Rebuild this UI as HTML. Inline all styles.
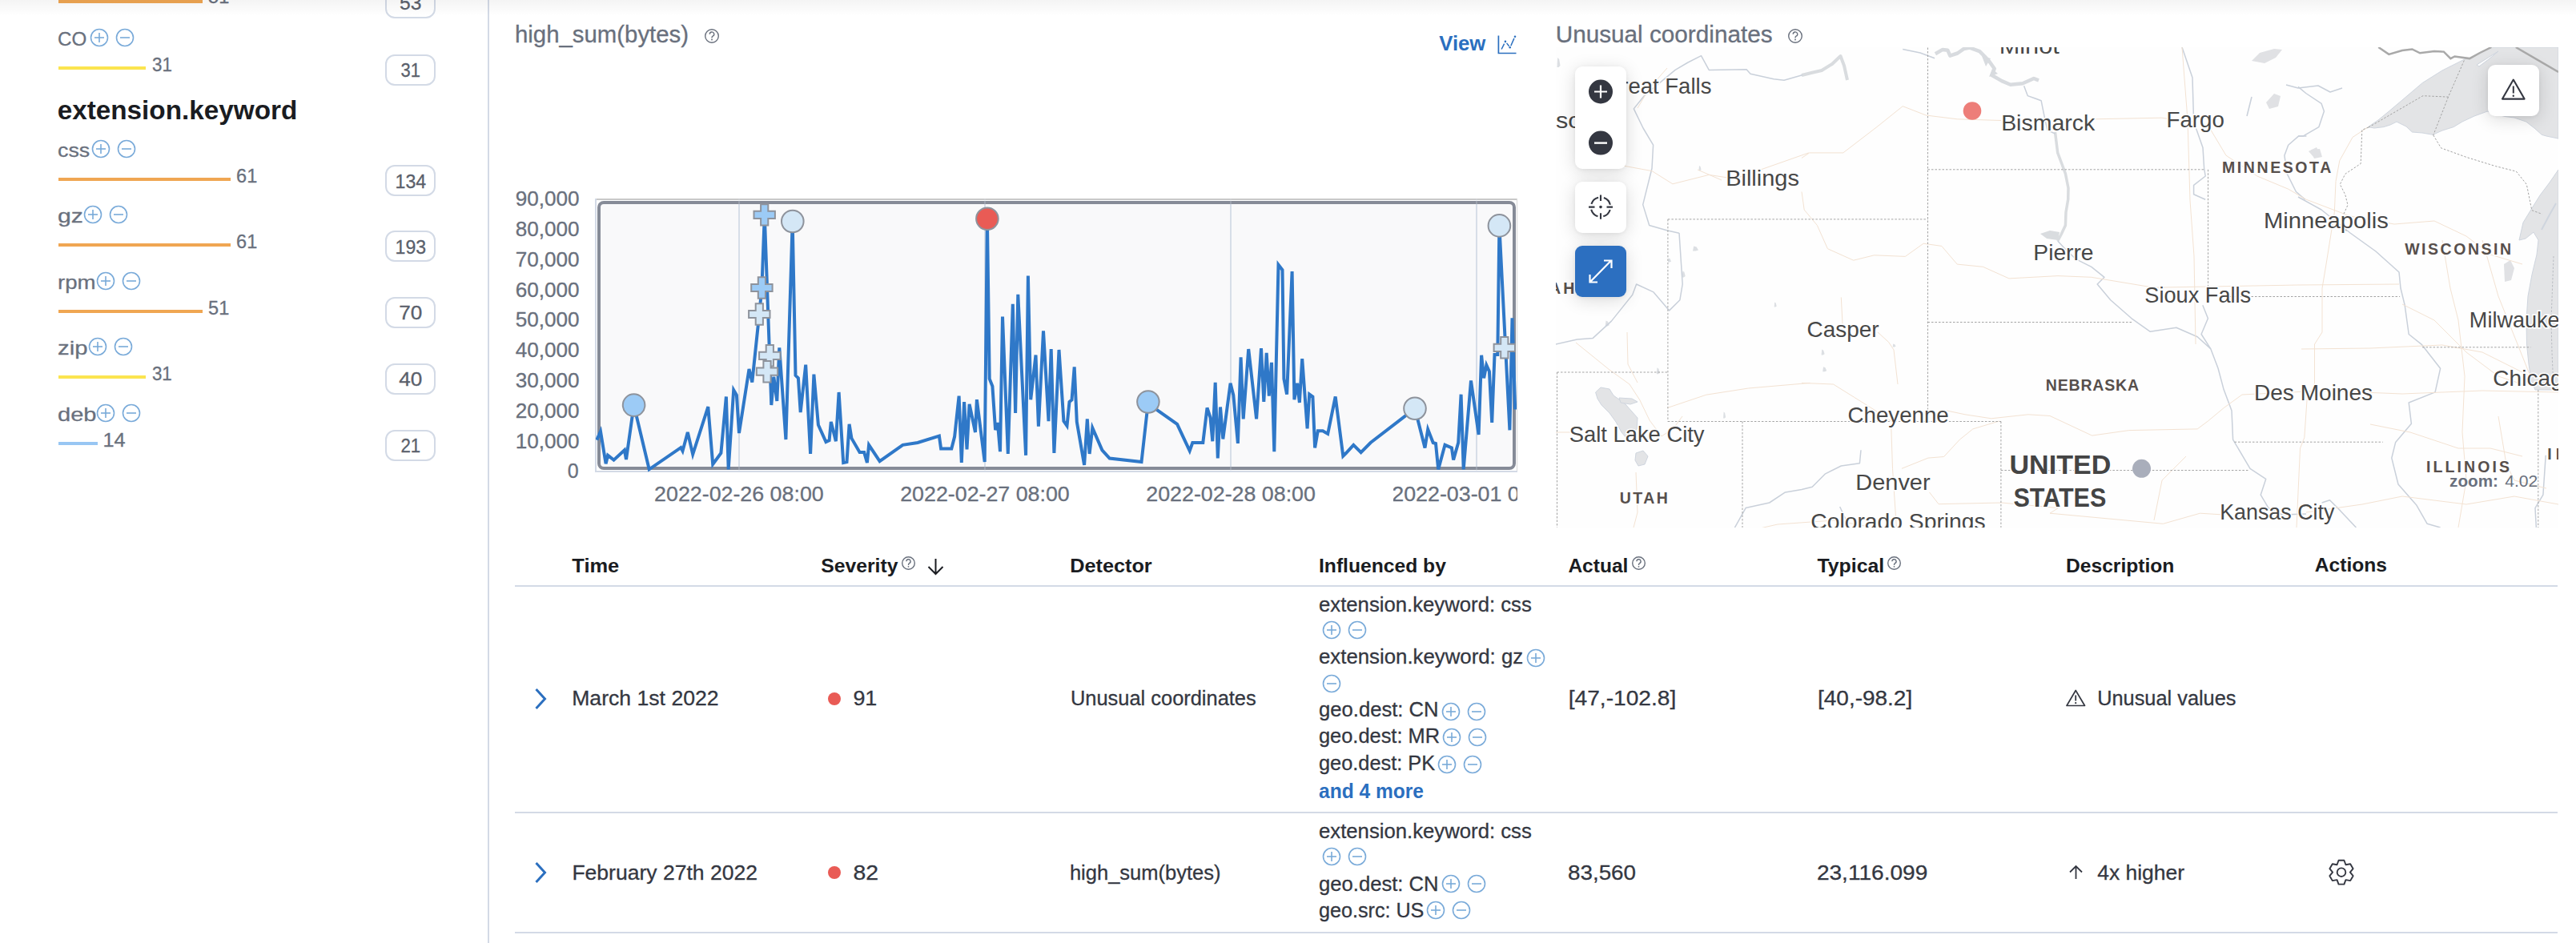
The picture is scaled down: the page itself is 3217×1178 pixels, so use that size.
<!DOCTYPE html><html><head><meta charset="utf-8"><style>
html,body{margin:0;padding:0;background:#fff;width:3217px;height:1178px;overflow:hidden;position:relative;font-family:"Liberation Sans",sans-serif}
.t{position:absolute;white-space:nowrap;line-height:1}
.r{position:absolute;display:block}
.ov{left:0;top:0;overflow:visible}
</style></head><body>
<div class="r" style="left:0.0px;top:0.0px;width:3217.0px;height:20.0px;background:linear-gradient(to bottom, rgba(0,0,0,0.045), rgba(0,0,0,0));z-index:50"></div>
<div class="r" style="left:73.0px;top:-1.0px;width:180.0px;height:5.0px;background:#f0a652;"></div>
<svg class="r ov" width="1" height="1"><text x="260.1" y="4.2" font-size="24.5" fill="#69707d" font-weight="400" text-anchor="start" textLength="26.2" lengthAdjust="spacingAndGlyphs" stroke="#69707d" stroke-width="0.3" font-family="Liberation Sans" >51</text></svg>
<div class="r" style="left:481px;top:-16.0px;width:63px;height:39px;box-sizing:border-box;border:2px solid #d3dae6;border-radius:12px"></div>
<svg class="r ov" width="1" height="1"><text x="512.8" y="12.2" font-size="24.5" fill="#5a606b" font-weight="400" text-anchor="middle" textLength="27.4" lengthAdjust="spacingAndGlyphs" stroke="#5a606b" stroke-width="0.3" font-family="Liberation Sans" >53</text></svg>
<svg class="r ov" width="1" height="1"><text x="72.0" y="56.9" font-size="24.5" fill="#69707d" font-weight="400" text-anchor="start" textLength="36.2" lengthAdjust="spacingAndGlyphs" stroke="#69707d" stroke-width="0.3" font-family="Liberation Sans" >CO</text></svg>
<svg class="r" style="left:111.2px;top:34.2px" width="26" height="26" viewBox="0 0 26 26"><circle cx="13" cy="13" r="10.5" fill="none" stroke="#79aad9" stroke-width="1.6"/><line x1="7" y1="13" x2="19" y2="13" stroke="#79aad9" stroke-width="1.6"/><line x1="13" y1="7" x2="13" y2="19" stroke="#79aad9" stroke-width="1.6"/></svg>
<svg class="r" style="left:143.0px;top:34.2px" width="26" height="26" viewBox="0 0 26 26"><circle cx="13" cy="13" r="10.5" fill="none" stroke="#79aad9" stroke-width="1.6"/><line x1="7" y1="13" x2="19" y2="13" stroke="#79aad9" stroke-width="1.6"/></svg>
<div class="r" style="left:73.0px;top:83.0px;width:109.0px;height:4.2px;background:#fbe44f;"></div>
<svg class="r ov" width="1" height="1"><text x="190.0" y="89.2" font-size="24.5" fill="#69707d" font-weight="400" text-anchor="start" textLength="24.9" lengthAdjust="spacingAndGlyphs" stroke="#69707d" stroke-width="0.3" font-family="Liberation Sans" >31</text></svg>
<div class="r" style="left:481px;top:67.5px;width:63px;height:39px;box-sizing:border-box;border:2px solid #d3dae6;border-radius:12px"></div>
<svg class="r ov" width="1" height="1"><text x="512.8" y="95.7" font-size="24.5" fill="#5a606b" font-weight="400" text-anchor="middle" textLength="24.4" lengthAdjust="spacingAndGlyphs" stroke="#5a606b" stroke-width="0.3" font-family="Liberation Sans" >31</text></svg>
<svg class="r ov" width="1" height="1"><text x="72.0" y="196.0" font-size="24.5" fill="#69707d" font-weight="400" text-anchor="start" textLength="40.2" lengthAdjust="spacingAndGlyphs" stroke="#69707d" stroke-width="0.3" font-family="Liberation Sans" >css</text></svg>
<svg class="r" style="left:113.2px;top:173.3px" width="26" height="26" viewBox="0 0 26 26"><circle cx="13" cy="13" r="10.5" fill="none" stroke="#79aad9" stroke-width="1.6"/><line x1="7" y1="13" x2="19" y2="13" stroke="#79aad9" stroke-width="1.6"/><line x1="13" y1="7" x2="13" y2="19" stroke="#79aad9" stroke-width="1.6"/></svg>
<svg class="r" style="left:145.0px;top:173.3px" width="26" height="26" viewBox="0 0 26 26"><circle cx="13" cy="13" r="10.5" fill="none" stroke="#79aad9" stroke-width="1.6"/><line x1="7" y1="13" x2="19" y2="13" stroke="#79aad9" stroke-width="1.6"/></svg>
<div class="r" style="left:73.0px;top:221.8px;width:215.0px;height:4.2px;background:#f0a652;"></div>
<svg class="r ov" width="1" height="1"><text x="295.1" y="228.0" font-size="24.5" fill="#69707d" font-weight="400" text-anchor="start" textLength="26.2" lengthAdjust="spacingAndGlyphs" stroke="#69707d" stroke-width="0.3" font-family="Liberation Sans" >61</text></svg>
<div class="r" style="left:481px;top:206.3px;width:63px;height:39px;box-sizing:border-box;border:2px solid #d3dae6;border-radius:12px"></div>
<svg class="r ov" width="1" height="1"><text x="512.8" y="234.5" font-size="24.5" fill="#5a606b" font-weight="400" text-anchor="middle" textLength="38.5" lengthAdjust="spacingAndGlyphs" stroke="#5a606b" stroke-width="0.3" font-family="Liberation Sans" >134</text></svg>
<svg class="r ov" width="1" height="1"><text x="72.0" y="278.1" font-size="24.5" fill="#69707d" font-weight="400" text-anchor="start" textLength="31.9" lengthAdjust="spacingAndGlyphs" stroke="#69707d" stroke-width="0.3" font-family="Liberation Sans" >gz</text></svg>
<svg class="r" style="left:103.2px;top:255.4px" width="26" height="26" viewBox="0 0 26 26"><circle cx="13" cy="13" r="10.5" fill="none" stroke="#79aad9" stroke-width="1.6"/><line x1="7" y1="13" x2="19" y2="13" stroke="#79aad9" stroke-width="1.6"/><line x1="13" y1="7" x2="13" y2="19" stroke="#79aad9" stroke-width="1.6"/></svg>
<svg class="r" style="left:135.0px;top:255.4px" width="26" height="26" viewBox="0 0 26 26"><circle cx="13" cy="13" r="10.5" fill="none" stroke="#79aad9" stroke-width="1.6"/><line x1="7" y1="13" x2="19" y2="13" stroke="#79aad9" stroke-width="1.6"/></svg>
<div class="r" style="left:73.0px;top:303.9px;width:215.0px;height:4.2px;background:#f0a652;"></div>
<svg class="r ov" width="1" height="1"><text x="295.1" y="310.1" font-size="24.5" fill="#69707d" font-weight="400" text-anchor="start" textLength="26.2" lengthAdjust="spacingAndGlyphs" stroke="#69707d" stroke-width="0.3" font-family="Liberation Sans" >61</text></svg>
<div class="r" style="left:481px;top:288.4px;width:63px;height:39px;box-sizing:border-box;border:2px solid #d3dae6;border-radius:12px"></div>
<svg class="r ov" width="1" height="1"><text x="512.8" y="316.6" font-size="24.5" fill="#5a606b" font-weight="400" text-anchor="middle" textLength="38.5" lengthAdjust="spacingAndGlyphs" stroke="#5a606b" stroke-width="0.3" font-family="Liberation Sans" >193</text></svg>
<svg class="r ov" width="1" height="1"><text x="72.0" y="360.7" font-size="24.5" fill="#69707d" font-weight="400" text-anchor="start" textLength="47.5" lengthAdjust="spacingAndGlyphs" stroke="#69707d" stroke-width="0.3" font-family="Liberation Sans" >rpm</text></svg>
<svg class="r" style="left:118.8px;top:338.0px" width="26" height="26" viewBox="0 0 26 26"><circle cx="13" cy="13" r="10.5" fill="none" stroke="#79aad9" stroke-width="1.6"/><line x1="7" y1="13" x2="19" y2="13" stroke="#79aad9" stroke-width="1.6"/><line x1="13" y1="7" x2="13" y2="19" stroke="#79aad9" stroke-width="1.6"/></svg>
<svg class="r" style="left:150.6px;top:338.0px" width="26" height="26" viewBox="0 0 26 26"><circle cx="13" cy="13" r="10.5" fill="none" stroke="#79aad9" stroke-width="1.6"/><line x1="7" y1="13" x2="19" y2="13" stroke="#79aad9" stroke-width="1.6"/></svg>
<div class="r" style="left:73.0px;top:386.6px;width:180.0px;height:4.2px;background:#f0a652;"></div>
<svg class="r ov" width="1" height="1"><text x="260.1" y="392.8" font-size="24.5" fill="#69707d" font-weight="400" text-anchor="start" textLength="26.2" lengthAdjust="spacingAndGlyphs" stroke="#69707d" stroke-width="0.3" font-family="Liberation Sans" >51</text></svg>
<div class="r" style="left:481px;top:370.5px;width:63px;height:39px;box-sizing:border-box;border:2px solid #d3dae6;border-radius:12px"></div>
<svg class="r ov" width="1" height="1"><text x="512.8" y="398.7" font-size="24.5" fill="#5a606b" font-weight="400" text-anchor="middle" textLength="29.1" lengthAdjust="spacingAndGlyphs" stroke="#5a606b" stroke-width="0.3" font-family="Liberation Sans" >70</text></svg>
<svg class="r ov" width="1" height="1"><text x="72.0" y="442.9" font-size="24.5" fill="#69707d" font-weight="400" text-anchor="start" textLength="37.5" lengthAdjust="spacingAndGlyphs" stroke="#69707d" stroke-width="0.3" font-family="Liberation Sans" >zip</text></svg>
<svg class="r" style="left:108.7px;top:420.2px" width="26" height="26" viewBox="0 0 26 26"><circle cx="13" cy="13" r="10.5" fill="none" stroke="#79aad9" stroke-width="1.6"/><line x1="7" y1="13" x2="19" y2="13" stroke="#79aad9" stroke-width="1.6"/><line x1="13" y1="7" x2="13" y2="19" stroke="#79aad9" stroke-width="1.6"/></svg>
<svg class="r" style="left:140.5px;top:420.2px" width="26" height="26" viewBox="0 0 26 26"><circle cx="13" cy="13" r="10.5" fill="none" stroke="#79aad9" stroke-width="1.6"/><line x1="7" y1="13" x2="19" y2="13" stroke="#79aad9" stroke-width="1.6"/></svg>
<div class="r" style="left:73.0px;top:468.6px;width:109.0px;height:4.2px;background:#fbe44f;"></div>
<svg class="r ov" width="1" height="1"><text x="189.9" y="474.8" font-size="24.5" fill="#69707d" font-weight="400" text-anchor="start" textLength="24.9" lengthAdjust="spacingAndGlyphs" stroke="#69707d" stroke-width="0.3" font-family="Liberation Sans" >31</text></svg>
<div class="r" style="left:481px;top:453.5px;width:63px;height:39px;box-sizing:border-box;border:2px solid #d3dae6;border-radius:12px"></div>
<svg class="r ov" width="1" height="1"><text x="512.8" y="481.7" font-size="24.5" fill="#5a606b" font-weight="400" text-anchor="middle" textLength="29.1" lengthAdjust="spacingAndGlyphs" stroke="#5a606b" stroke-width="0.3" font-family="Liberation Sans" >40</text></svg>
<svg class="r ov" width="1" height="1"><text x="72.0" y="526.0" font-size="24.5" fill="#69707d" font-weight="400" text-anchor="start" textLength="48.5" lengthAdjust="spacingAndGlyphs" stroke="#69707d" stroke-width="0.3" font-family="Liberation Sans" >deb</text></svg>
<svg class="r" style="left:119.2px;top:503.3px" width="26" height="26" viewBox="0 0 26 26"><circle cx="13" cy="13" r="10.5" fill="none" stroke="#79aad9" stroke-width="1.6"/><line x1="7" y1="13" x2="19" y2="13" stroke="#79aad9" stroke-width="1.6"/><line x1="13" y1="7" x2="13" y2="19" stroke="#79aad9" stroke-width="1.6"/></svg>
<svg class="r" style="left:151.0px;top:503.3px" width="26" height="26" viewBox="0 0 26 26"><circle cx="13" cy="13" r="10.5" fill="none" stroke="#79aad9" stroke-width="1.6"/><line x1="7" y1="13" x2="19" y2="13" stroke="#79aad9" stroke-width="1.6"/></svg>
<div class="r" style="left:73.0px;top:551.7px;width:48.7px;height:4.2px;background:#98c6f3;"></div>
<svg class="r ov" width="1" height="1"><text x="128.5" y="557.9" font-size="24.5" fill="#69707d" font-weight="400" text-anchor="start" textLength="28.2" lengthAdjust="spacingAndGlyphs" stroke="#69707d" stroke-width="0.3" font-family="Liberation Sans" >14</text></svg>
<div class="r" style="left:481px;top:536.5px;width:63px;height:39px;box-sizing:border-box;border:2px solid #d3dae6;border-radius:12px"></div>
<svg class="r ov" width="1" height="1"><text x="512.8" y="564.7" font-size="24.5" fill="#5a606b" font-weight="400" text-anchor="middle" textLength="24.8" lengthAdjust="spacingAndGlyphs" stroke="#5a606b" stroke-width="0.3" font-family="Liberation Sans" >21</text></svg>
<svg class="r ov" width="1" height="1"><text x="71.7" y="149.1" font-size="33" fill="#1a1c21" font-weight="700" text-anchor="start" textLength="299.6" lengthAdjust="spacingAndGlyphs" font-family="Liberation Sans" >extension.keyword</text></svg>
<div class="r" style="left:609.0px;top:0.0px;width:2.0px;height:1178.0px;background:#d3dae6;"></div>
<svg class="r ov" width="1" height="1"><text x="643.0" y="52.6" font-size="29" fill="#69707d" font-weight="400" text-anchor="start" textLength="217.0" lengthAdjust="spacingAndGlyphs" stroke="#69707d" stroke-width="0.3" font-family="Liberation Sans" >high_sum(bytes)</text></svg>
<svg class="r" style="left:878.0px;top:34.0px" width="22" height="22"><circle cx="11.0" cy="11.0" r="8.3" fill="none" stroke="#69707d" stroke-width="1.4"/><path d="M8.24705882352941,8.670588235294117 a2.7529411764705882,2.7529411764705882 0 1 1 3.811764705882353,2.541176470588235 c-0.9529411764705883,0.42352941176470593 -1.0588235294117647,0.9529411764705883 -1.0588235294117647,2.3294117647058825" fill="none" stroke="#69707d" stroke-width="1.4"/><circle cx="11.0" cy="15.552941176470588" r="0.9529411764705883" fill="#69707d"/></svg>
<svg class="r ov" width="1" height="1"><text x="1797.2" y="62.9" font-size="25" fill="#2b6fbf" font-weight="700" text-anchor="start" textLength="58.2" lengthAdjust="spacingAndGlyphs" font-family="Liberation Sans" >View</text></svg>
<svg class="r" style="left:1868px;top:42px" width="28" height="28" viewBox="0 0 28 28"><path d="M3.4,2.4 V24.5 H25.5" fill="none" stroke="#2b6fbf" stroke-width="1.7"/><path d="M7.1,19.5 L10.6,12.7 M13.6,11.9 L16.6,15.7 M18.8,15.2 L22.9,5.9" fill="none" stroke="#2b6fbf" stroke-width="1.5"/><circle cx="11.9" cy="9.9" r="1.3" fill="#2b6fbf"/><circle cx="17.7" cy="17.3" r="1.3" fill="#2b6fbf"/><circle cx="24" cy="3.8" r="1.3" fill="#2b6fbf"/></svg>
<svg class="r ov" width="1" height="1"><text x="722.6" y="597.3" font-size="25" fill="#69707d" font-weight="400" text-anchor="end" stroke="#69707d" stroke-width="0.3" font-family="Liberation Sans" >0</text></svg>
<svg class="r ov" width="1" height="1"><text x="723.6" y="559.5" font-size="25" fill="#69707d" font-weight="400" text-anchor="end" textLength="79.9" lengthAdjust="spacingAndGlyphs" stroke="#69707d" stroke-width="0.3" font-family="Liberation Sans" >10,000</text></svg>
<svg class="r ov" width="1" height="1"><text x="723.6" y="521.7" font-size="25" fill="#69707d" font-weight="400" text-anchor="end" textLength="79.9" lengthAdjust="spacingAndGlyphs" stroke="#69707d" stroke-width="0.3" font-family="Liberation Sans" >20,000</text></svg>
<svg class="r ov" width="1" height="1"><text x="723.6" y="483.9" font-size="25" fill="#69707d" font-weight="400" text-anchor="end" textLength="79.9" lengthAdjust="spacingAndGlyphs" stroke="#69707d" stroke-width="0.3" font-family="Liberation Sans" >30,000</text></svg>
<svg class="r ov" width="1" height="1"><text x="723.6" y="446.1" font-size="25" fill="#69707d" font-weight="400" text-anchor="end" textLength="79.9" lengthAdjust="spacingAndGlyphs" stroke="#69707d" stroke-width="0.3" font-family="Liberation Sans" >40,000</text></svg>
<svg class="r ov" width="1" height="1"><text x="723.6" y="408.4" font-size="25" fill="#69707d" font-weight="400" text-anchor="end" textLength="79.9" lengthAdjust="spacingAndGlyphs" stroke="#69707d" stroke-width="0.3" font-family="Liberation Sans" >50,000</text></svg>
<svg class="r ov" width="1" height="1"><text x="723.6" y="370.6" font-size="25" fill="#69707d" font-weight="400" text-anchor="end" textLength="79.9" lengthAdjust="spacingAndGlyphs" stroke="#69707d" stroke-width="0.3" font-family="Liberation Sans" >60,000</text></svg>
<svg class="r ov" width="1" height="1"><text x="723.6" y="332.8" font-size="25" fill="#69707d" font-weight="400" text-anchor="end" textLength="79.9" lengthAdjust="spacingAndGlyphs" stroke="#69707d" stroke-width="0.3" font-family="Liberation Sans" >70,000</text></svg>
<svg class="r ov" width="1" height="1"><text x="723.6" y="295.0" font-size="25" fill="#69707d" font-weight="400" text-anchor="end" textLength="79.9" lengthAdjust="spacingAndGlyphs" stroke="#69707d" stroke-width="0.3" font-family="Liberation Sans" >80,000</text></svg>
<svg class="r ov" width="1" height="1"><text x="723.6" y="257.2" font-size="25" fill="#69707d" font-weight="400" text-anchor="end" textLength="79.9" lengthAdjust="spacingAndGlyphs" stroke="#69707d" stroke-width="0.3" font-family="Liberation Sans" >90,000</text></svg>
<div class="r" style="left:743.0px;top:248.0px;width:152.0px;height:2.0px;background:#c8c8c8;"></div>
<div class="r" style="left:743.0px;top:248.0px;width:1152.0px;height:2.0px;background:#c8c8c8;"></div>
<div class="r" style="left:743.0px;top:248.0px;width:2.0px;height:342.0px;background:#d3dae6;"></div>
<div class="r" style="left:1894.0px;top:248.0px;width:1.0px;height:342.0px;background:#d9d9d9;"></div>
<div class="r" style="left:743.0px;top:588.0px;width:1152.0px;height:2.0px;background:#d3dae6;"></div>
<div class="r" style="left:746px;top:251px;width:1147px;height:336px;box-sizing:border-box;border:4px solid #868b97;border-radius:8px;background:#f9f9fa"></div>
<div class="r" style="left:921.9px;top:255.0px;width:2.0px;height:328.0px;background:rgba(211,218,230,0.9);"></div>
<div class="r" style="left:921.9px;top:248.0px;width:2.0px;height:7.0px;background:rgba(211,218,230,0.25);"></div>
<div class="r" style="left:921.9px;top:583.0px;width:2.0px;height:6.0px;background:rgba(211,218,230,0.25);"></div>
<div class="r" style="left:1229.0px;top:255.0px;width:2.0px;height:328.0px;background:rgba(211,218,230,0.9);"></div>
<div class="r" style="left:1229.0px;top:248.0px;width:2.0px;height:7.0px;background:rgba(211,218,230,0.25);"></div>
<div class="r" style="left:1229.0px;top:583.0px;width:2.0px;height:6.0px;background:rgba(211,218,230,0.25);"></div>
<div class="r" style="left:1536.1px;top:255.0px;width:2.0px;height:328.0px;background:rgba(211,218,230,0.9);"></div>
<div class="r" style="left:1536.1px;top:248.0px;width:2.0px;height:7.0px;background:rgba(211,218,230,0.25);"></div>
<div class="r" style="left:1536.1px;top:583.0px;width:2.0px;height:6.0px;background:rgba(211,218,230,0.25);"></div>
<div class="r" style="left:1843.1px;top:255.0px;width:2.0px;height:328.0px;background:rgba(211,218,230,0.9);"></div>
<div class="r" style="left:1843.1px;top:248.0px;width:2.0px;height:7.0px;background:rgba(211,218,230,0.25);"></div>
<div class="r" style="left:1843.1px;top:583.0px;width:2.0px;height:6.0px;background:rgba(211,218,230,0.25);"></div>
<svg class="r ov" width="1" height="1"><text x="922.9" y="626.0" font-size="25.5" fill="#69707d" font-weight="400" text-anchor="middle" textLength="211.6" lengthAdjust="spacingAndGlyphs" stroke="#69707d" stroke-width="0.3" font-family="Liberation Sans" >2022-02-26 08:00</text></svg>
<svg class="r ov" width="1" height="1"><text x="1230.0" y="626.0" font-size="25.5" fill="#69707d" font-weight="400" text-anchor="middle" textLength="211.6" lengthAdjust="spacingAndGlyphs" stroke="#69707d" stroke-width="0.3" font-family="Liberation Sans" >2022-02-27 08:00</text></svg>
<svg class="r ov" width="1" height="1"><text x="1537.1" y="626.0" font-size="25.5" fill="#69707d" font-weight="400" text-anchor="middle" textLength="211.6" lengthAdjust="spacingAndGlyphs" stroke="#69707d" stroke-width="0.3" font-family="Liberation Sans" >2022-02-28 08:00</text></svg>
<div class="r" style="left:1740px;top:600px;width:155px;height:40px;overflow:hidden">
<svg class="r ov" width="1" height="1"><text x="104.1" y="26.0" font-size="25.5" fill="#69707d" font-weight="400" text-anchor="middle" textLength="211.6" lengthAdjust="spacingAndGlyphs" stroke="#69707d" stroke-width="0.3" font-family="Liberation Sans" >2022-03-01 08:00</text></svg>
</div>
<svg class="r" style="left:0;top:0" width="3217" height="700"><defs><clipPath id="pc"><rect x="744" y="240" width="1150" height="360"/></clipPath></defs><polyline clip-path="url(#pc)" points="745.3,549.6 750,539 756.6,579.3 759.1,568.7 766.5,574.6 779.9,562.3 782,574 791.6,506.1 810.7,586.3 850.3,559.2 852.5,563.4 858.8,540 865.2,567.6 884.3,508.2 890.2,579.9 900.4,566 906.9,495.5 909.7,586.4 916.2,487.2 919.9,493.6 923,541 935.5,461 939.3,477.5 948.2,392.5 951.4,359.5 954.8,268.6 963.3,506 966.3,470.7 970.3,501 973.3,434.4 981.4,549 989.7,276.5 993.5,469 996.9,472.3 999.7,515 1006.2,455.6 1012.1,566.9 1016.4,467.7 1021.9,530.7 1031.5,552 1035.6,550.2 1037.8,527 1043.9,551.2 1047.6,490 1053.2,578 1057.5,577.1 1060.6,529.8 1063.4,547.4 1073.6,565.1 1079.2,565.1 1082.9,578 1085.1,555.8 1098.6,576.2 1127.4,555.8 1146,553 1172.9,544.7 1175.1,560.4 1188.3,560.4 1192.1,545.6 1197.6,494.6 1200.8,578 1204.1,502 1207.5,561.4 1210.6,504.8 1218,540 1219.9,499.2 1229.7,577.1 1232.9,273.2 1235.7,473.2 1239.4,482.5 1243.1,537.2 1245.9,528 1249,564.1 1252,395.6 1258.8,567 1264.8,379.9 1268.1,515.9 1271.3,367.8 1281.1,568.8 1283.9,344.6 1287.2,499.2 1293.5,443.6 1296.9,532.6 1303,413.3 1309.5,526.1 1312.7,436.1 1316.4,566 1322.5,437 1328.4,526.1 1332.5,532 1335.5,502 1338.5,499.5 1341.7,458.4 1344.8,527 1354.1,580.8 1357.8,523.3 1360.6,566.9 1364.3,534.5 1376.4,562.3 1385.7,572.5 1425.5,577.1 1433.9,502 1445,512.2 1470.1,529.8 1485.7,563.2 1489.3,553 1502.3,553 1507.5,509.4 1511.5,521.5 1514.3,551.2 1517.7,477.9 1520.8,572.5 1524,508.5 1527.3,548.4 1536.6,478.8 1540.3,493.6 1545.9,553.9 1549.6,446.3 1552.7,523.3 1559.2,436.1 1569.1,523.3 1575,435.2 1578.3,502 1581.7,440.8 1584.8,494.6 1588,452.8 1591.3,564.1 1596.5,330.7 1601.5,337.2 1603.4,473.2 1607.1,492.7 1613.6,339 1616.4,499.2 1620,478.8 1622.9,502.9 1626.2,448.2 1632.6,535.4 1635.2,492.5 1639.4,495.5 1642.1,559.5 1645.8,538.2 1651.9,538.2 1658.2,541.9 1667.7,495.5 1677.3,569.7 1681,566 1690.3,555.8 1699.6,565.1 1711.6,553 1767,510.3 1779.5,559.5 1783.2,536.3 1789.7,553 1793,554 1796.2,586.4 1804.5,555.8 1812.9,559.5 1815.1,574.4 1821.2,553 1824.6,492.7 1827.7,586.4 1837,475.5 1846.6,543 1850.1,443.8 1853.1,472.4 1856.3,456 1859.9,464 1863.2,528 1866.5,443 1870.3,443 1872.4,282 1885.4,537.3 1888.5,397.3 1892.2,511.5" fill="none" stroke="#2f78c8" stroke-width="4" stroke-linejoin="miter" stroke-miterlimit="4"/><circle cx="791.6" cy="506.1" r="13.8" fill="#9ccbf6" stroke="#8e939c" stroke-width="2"/><circle cx="989.8" cy="276.5" r="13.8" fill="#d4e7f6" stroke="#8e939c" stroke-width="2"/><circle cx="1232.9" cy="273.2" r="13.8" fill="#e95b55" stroke="#8e939c" stroke-width="2"/><circle cx="1433.9" cy="502" r="13.8" fill="#9ccbf6" stroke="#8e939c" stroke-width="2"/><circle cx="1767" cy="510.3" r="13.8" fill="#d4e7f6" stroke="#8e939c" stroke-width="2"/><circle cx="1872.4" cy="281.9" r="13.8" fill="#d4e7f6" stroke="#8e939c" stroke-width="2"/><path d="M950.1,255.2 H959.3000000000001 V263.79999999999995 H967.9000000000001 V273.0 H959.3000000000001 V281.59999999999997 H950.1 V273.0 H941.5 V263.79999999999995 H950.1 Z" fill="#9ccbf6" stroke="#8e939c" stroke-width="2"/><path d="M946.8,346.3 H956.0 V354.9 H964.6 V364.1 H956.0 V372.7 H946.8 V364.1 H938.1999999999999 V354.9 H946.8 Z" fill="#9ccbf6" stroke="#8e939c" stroke-width="2"/><path d="M943.6999999999999,379.3 H952.9 V387.9 H961.5 V397.1 H952.9 V405.7 H943.6999999999999 V397.1 H935.0999999999999 V387.9 H943.6999999999999 Z" fill="#d4e7f6" stroke="#8e939c" stroke-width="2"/><path d="M956.6999999999999,431.1 H965.9 V439.7 H974.5 V448.90000000000003 H965.9 V457.5 H956.6999999999999 V448.90000000000003 H948.0999999999999 V439.7 H956.6999999999999 Z" fill="#d4e7f6" stroke="#8e939c" stroke-width="2"/><path d="M953.4,451.0 H962.6 V459.59999999999997 H971.2 V468.8 H962.6 V477.4 H953.4 V468.8 H944.8 V459.59999999999997 H953.4 Z" fill="#d4e7f6" stroke="#8e939c" stroke-width="2"/><path d="M1874.2,421.1 H1883.3999999999999 V429.7 H1892.0 V438.90000000000003 H1883.3999999999999 V447.5 H1874.2 V438.90000000000003 H1865.6 V429.7 H1874.2 Z" fill="#d4e7f6" stroke="#8e939c" stroke-width="2"/></svg>
<svg class="r ov" width="1" height="1"><text x="1942.7" y="52.6" font-size="29" fill="#69707d" font-weight="400" text-anchor="start" textLength="270.9" lengthAdjust="spacingAndGlyphs" stroke="#69707d" stroke-width="0.3" font-family="Liberation Sans" >Unusual coordinates</text></svg>
<svg class="r" style="left:2230.9px;top:33.8px" width="22" height="22"><circle cx="11.0" cy="11.0" r="8.3" fill="none" stroke="#69707d" stroke-width="1.4"/><path d="M8.24705882352941,8.670588235294117 a2.7529411764705882,2.7529411764705882 0 1 1 3.811764705882353,2.541176470588235 c-0.9529411764705883,0.42352941176470593 -1.0588235294117647,0.9529411764705883 -1.0588235294117647,2.3294117647058825" fill="none" stroke="#69707d" stroke-width="1.4"/><circle cx="11.0" cy="15.552941176470588" r="0.9529411764705883" fill="#69707d"/></svg>
<svg class="r" style="left:1943px;top:59px" width="1252" height="600" viewBox="1943 59 1252 600"><rect x="1943" y="59" width="1252" height="600" fill="#fefefe"/><path d="M2957.4,158.6 L2970,150 L2983.3,139.1 L3000,125 L3025.3,103.5 L3050,88 L3077.1,74.4 L3096.5,64.7 L3112.7,59 L3195,59 L3195,173.1 L3180,170 L3174.2,168.3 L3165,160 L3154.8,152.1 L3140,147 L3128.9,145.6 L3118,143 L3106.2,139.1 L3090,145 L3075,152 L3064.2,158.6 L3050,163 L3038.3,168.3 L3025,166 L3012.4,165 L3005,158 L2993,152.1 L2985,156 L2976.8,158.6 L2965,160 Z" fill="#e3e4e6" stroke="#cfd5de" stroke-width="1"/><path d="M2970.3,59 L2983.3,67.9 L3000,63 L3012.4,61.5 L3022.1,66.3 L3040,64 L3051.9,64.6 L3060.4,73.1 L3065.5,70.5 L3084.1,73.1 L3097,66 L3111.3,59 Z" fill="#fefefe"/><path d="M2970.3,59 L2983.3,67.9 L3000,63 L3012.4,61.5 L3022.1,66.3 L3040,64 L3051.9,64.6 L3060.4,73.1 L3065.5,70.5 L3084.1,73.1 L3097,66 L3111.3,59" fill="none" stroke="#a9a9a9" stroke-width="2.5"/><path d="M3141.8,59 L3195,90" fill="none" stroke="#a9a9a9" stroke-width="2.5"/><path d="M3093,81 L3112,69 L3120,64 L3108,74 L3096,83 Z" fill="#fefefe" stroke="#cfd5de" stroke-width="1"/><path d="M3195,212 L3184,228 L3172,244 L3162,260 L3151,278 L3146,300 L3154,298 L3164,290 L3170,300 L3168,318 L3162,343 L3157,370 L3155,400 L3155.5,430 L3158,455 L3161,475 L3166,487 L3195,487 Z" fill="#e3e4e6" stroke="#cfd5de" stroke-width="1"/><path d="M3174,287 L3183,270 L3192,254" fill="none" stroke="#cfd5de" stroke-width="2"/><path d="M3189,320 L3186,400 L3187,440 L3189,487" fill="none" stroke="#b9bcc2" stroke-width="1" stroke-dasharray="2.5,2"/><path d="M1992.6,490 L1999,484 L2010,486 L2015,494 L2022,499 L2030,505 L2037,513 L2045,522 L2044,536 L2038,544 L2031,547 L2025,540 L2018,527 L2010,516 L2000,506 L1995,498 Z" fill="#e3e4e6" stroke="#cfd5de" stroke-width="1"/><path d="M2022,497 L2038,498 L2045,502 L2036,505 L2024,503 Z" fill="#e3e4e6" stroke="#cfd5de" stroke-width="1"/><path d="M2043,566 L2052,563 L2058,570 L2054,580 L2046,582 L2042,575 Z" fill="#e3e4e6" stroke="#cfd5de" stroke-width="1"/><path d="M2416.9,67.3 L2426.1,61.9 L2432.3,62.7 L2435.3,69.6 L2444.6,66.5 L2452.3,61.1 L2460,59.6 L2472.2,64.2 L2478.4,70.4 L2484.5,77 L2490.7,85.7 L2487.6,94 L2499.9,101.1 L2510.7,105.7 L2526,104.2 L2539.9,98 L2546,100.3" fill="none" stroke="#d8dbdf" stroke-width="4.5" stroke-linejoin="round"/><path d="M2475,70 L2486,73 L2480,83 Z M2488,86 L2495,92 L2484,96 Z" fill="#d8dbdf"/><path d="M2250,94 L2262,91 L2275,88 L2288,80 L2298.5,70 L2303,82 L2307,100" fill="none" stroke="#d9dcdf" stroke-width="4" stroke-linejoin="round"/><path d="M2566.5,165 L2569.7,190.9 L2575,205 L2579.4,216.8 L2583,235 L2582.7,249.2 L2580,265 L2579.4,281.5 L2574,293 L2569.7,301" fill="none" stroke="#d9dcdf" stroke-width="3.5" stroke-linejoin="round"/><path d="M2548,292 L2560,288 L2572,290 L2570,300 L2556,298 Z" fill="#d9dcdf"/><path d="M2812,76 L2822,66 L2840,61 L2850,62 L2842,72 L2828,79 Z" fill="#e0e1e4"/><path d="M2830,128 L2840,117 L2848,120 L2845,133 L2834,136 Z" fill="#e0e1e4"/><path d="M2883,189 L2893,184 L2897,192 L2890,197 Z" fill="#e0e1e4"/><path d="M2886,187 L2897,186 L2900,196 L2890,198 Z" fill="#e0e1e4"/><path d="M3127,330 L3135,325 L3140,335 L3136,350 L3128,352 Z" fill="#e0e1e4"/><path d="M2114.0,313.6 L2115.1666666666665,307.6 L2118.6666666666665,308.6 L2121.0,312.6 L2117.5,313.6 Z" fill="#dcdfe3"/><path d="M2100.7,346.4 L2101.3666666666663,338.4 L2103.3666666666663,339.7333333333333 L2104.7,345.06666666666666 L2102.7,346.4 Z" fill="#dcdfe3"/><path d="M2215.7,383.6 L2216.2,377.6 L2217.7,378.6 L2218.7,382.6 L2217.2,383.6 Z" fill="#dcdfe3"/><path d="M2068.8,467.3 L2069.4666666666667,459.3 L2071.4666666666667,460.6333333333333 L2072.8,465.9666666666667 L2070.8,467.3 Z" fill="#dcdfe3"/><path d="M2152.1,522.5 L2152.6,514.5 L2154.1,515.8333333333334 L2155.1,521.1666666666666 L2153.6,522.5 Z" fill="#dcdfe3"/><path d="M2274.6,443.5 L2275.2666666666664,436.5 L2277.2666666666664,437.6666666666667 L2278.6,442.3333333333333 L2276.6,443.5 Z" fill="#dcdfe3"/><path d="M2276.2,464.2 L2277.0333333333333,458.2 L2279.5333333333333,459.2 L2281.2,463.2 L2278.7,464.2 Z" fill="#dcdfe3"/><path d="M2363.6,433.5 L2364.2666666666664,429.5 L2366.2666666666664,430.1666666666667 L2367.6,432.8333333333333 L2365.6,433.5 Z" fill="#dcdfe3"/><path d="M2004.7,407.5 L2005.5333333333333,400.5 L2008.0333333333333,401.6666666666667 L2009.7,406.3333333333333 L2007.2,407.5 Z" fill="#dcdfe3"/><path d="M1944.5,84.0 L1945.1666666666667,72.0 L1947.1666666666667,74.0 L1948.5,82.0 L1946.5,84.0 Z" fill="#dcdfe3"/><path d="M2121.5,213.0 L2122.0,207.0 L2123.5,208.0 L2124.5,212.0 L2123,213.0 Z" fill="#dcdfe3"/><path d="M2083.0,327.5 L2083.6666666666665,322.5 L2085.6666666666665,323.3333333333333 L2087.0,326.6666666666667 L2085,327.5 Z" fill="#dcdfe3"/><path d="M2053.3,119.7 L2040.3,135.9 L2052,160 L2064.6,181.2 L2063,210.3 L2051.7,255.6 L2059.7,281.5 L2082.4,288 L2097,291.2" fill="none" stroke="#c9d0da" stroke-width="1.5" stroke-linejoin="round"/><path d="M2053.3,119.7 L2092.1,87.4 L2108,78 L2124.5,69.6 L2134.2,87.4 L2181.1,86.7 L2186,92.2 L2215.1,98.7 L2228,100.3 L2250.7,93.8" fill="none" stroke="#c9d0da" stroke-width="1.5" stroke-linejoin="round"/><path d="M2376.2,61.5 L2398,66 L2416.1,72.7" fill="none" stroke="#c9d0da" stroke-width="1.5" stroke-linejoin="round"/><path d="M2527.6,107.3 L2532.2,119.6 L2549.1,125.7 L2552.2,141.1 L2556.8,162.6 L2566.5,167" fill="none" stroke="#c9d0da" stroke-width="1.5" stroke-linejoin="round"/><path d="M2569.7,301 L2580,312 L2592.4,323.6 L2611.8,333.3 L2628,346.3 L2619.2,355 L2635.7,374.7 L2662,397.8 L2685,414.2 L2717.9,409.3 L2744.2,420.8 L2760.7,435.6 L2770,460 L2777.1,486.6 L2787,512.9 L2788.6,549.1 L2810,585.3 L2829.7,598.4 L2823.2,618.2 L2833,634.6 L2850,643 L2880,642" fill="none" stroke="#c9d0da" stroke-width="1.5" stroke-linejoin="round"/><path d="M2725,59 L2738,97.1 L2739.6,152.1 L2751,184.4 L2752.6,210.3 L2754.2,220 L2739.6,231.4 L2739.6,242.7 L2754.2,249.2" fill="none" stroke="#c9d0da" stroke-width="1.5" stroke-linejoin="round"/><path d="M2750.8,381.3 L2757.4,397.8 L2749.1,417.5 L2760.7,435.6" fill="none" stroke="#c9d0da" stroke-width="1.5" stroke-linejoin="round"/><path d="M2880.4,169.9 L2870.7,169.9 L2857.7,181.2 L2852.9,194.2 L2856.1,216.8 L2867.4,239.5 L2878.8,249.2" fill="none" stroke="#c9d0da" stroke-width="1.5" stroke-linejoin="round"/><path d="M2870,108.4 L2879.7,116.5 L2899.1,129.4 L2902.4,139.1 L2895.9,158.6 L2876.5,169.9 L2870,169.9" fill="none" stroke="#c9d0da" stroke-width="1.5" stroke-linejoin="round"/><path d="M2870,246 L2899,262 L2935,291 L2967,314 L2996,340 L2998,360 L3003.2,381.3 L3008.2,417.5 L3024.6,430.7 L3047.6,460.3 L3041.1,489.9 L3008.2,503 L3011.4,529.3 L2991.7,552.4 L2986.8,572.1 L2995,605 L3018,631.3 L3031.2,654.3 L3047.6,659" fill="none" stroke="#c9d0da" stroke-width="1.5" stroke-linejoin="round"/><path d="M1940,430.7 L1969.6,424.1 L1989.3,422.4 L2012.4,401.1 L2038.7,368.2 L2043.6,355 L2065,364.9 L2084.7,387.9 L2097.9,374.7 L2101.2,355 L2097,291" fill="none" stroke="#c9d0da" stroke-width="1.5" stroke-linejoin="round"/><path d="M2163.7,664 L2180.1,634.6 L2209.7,628 L2229.5,614.9 L2250,611.6 L2263.2,608.3 L2279.6,591.8 L2299.3,582 L2322.4,578.7 L2324,562.2" fill="none" stroke="#c9d0da" stroke-width="1.5" stroke-linejoin="round"/><path d="M2297.7,633 L2306,651" fill="none" stroke="#c9d0da" stroke-width="1.5" stroke-linejoin="round"/><path d="M2899.6,628 L2909.5,624.7 L2922.6,637.9 L2942.4,659" fill="none" stroke="#c9d0da" stroke-width="1.5" stroke-linejoin="round"/><path d="M3179.2,568.8 L3175.9,618.2 L3166,634.6 L3167.7,665" fill="none" stroke="#c9d0da" stroke-width="1.5" stroke-linejoin="round"/><path d="M2812,121 L2806,145" fill="none" stroke="#c9d0da" stroke-width="1.5" stroke-linejoin="round"/><path d="M2855,106 L2870,110 L2895,107 L2910,115 L2925,110" fill="none" stroke="#c9d0da" stroke-width="1.5" stroke-linejoin="round"/><path d="M2027.4,207.1 L2063,213.6 L2088.9,229.8 L2134.2,218.4 L2166.5,223.3 L2258.8,190.9" fill="none" stroke="#f3e2d2" stroke-width="1" stroke-linejoin="round"/><path d="M2250,197.4 L2259.7,190.9 L2301.8,190.9 L2343.9,158.6 L2376.2,132.7 L2405.3,144 L2444.2,148.8 L2499.2,150.5" fill="none" stroke="#f3e2d2" stroke-width="1" stroke-linejoin="round"/><path d="M2615,148.8 L2699.2,147.2 L2739.6,152.1" fill="none" stroke="#f3e2d2" stroke-width="1" stroke-linejoin="round"/><path d="M2250,239.5 L2253.2,262.1 L2269.4,281.5 L2282.4,310.7 L2314.7,325.2 L2340.6,318.8 L2379.4,320.4 L2402.1,304.2 L2424.8,307.4 L2444.2,330.1 L2476.5,333.3 L2508.9,347.9 L2570,344.6 L2611.8,346.3 L2689.4,359.2 L2760,358 L2870,356 L2996,355" fill="none" stroke="#f3e2d2" stroke-width="1" stroke-linejoin="round"/><path d="M2250,478.4 L2289.5,480 L2315.8,496.4 L2342.1,512.9 L2361.8,526" fill="none" stroke="#f3e2d2" stroke-width="1" stroke-linejoin="round"/><path d="M2430.9,512.9 L2454,517.8 L2486.8,522.8 L2532.9,517.8 L2560,519.5 L2612.6,544.1 L2658.7,537.6 L2744.2,535.9 L2757.4,526 L2777.1,509.6 L2800,493 L2900,488 L3000,492 L3100,488 L3195,490" fill="none" stroke="#f3e2d2" stroke-width="1" stroke-linejoin="round"/><path d="M2375,585.3 L2407.9,572.1 L2427.6,570.5 L2447.4,549.1 L2463.8,535.9 L2496.7,526" fill="none" stroke="#f3e2d2" stroke-width="1" stroke-linejoin="round"/><path d="M2361.8,534.3 L2363.5,585.3 L2368.4,659" fill="none" stroke="#f3e2d2" stroke-width="1" stroke-linejoin="round"/><path d="M2370,480 L2365,437 L2358.6,427.4 L2345,415" fill="none" stroke="#f3e2d2" stroke-width="1" stroke-linejoin="round"/><path d="M2299.3,371.4 L2301,404.3" fill="none" stroke="#f3e2d2" stroke-width="1" stroke-linejoin="round"/><path d="M2409.5,614.9 L2421,629.7 L2500,628 L2570.4,634.6 L2560,641.2 L2701.4,654.3 L2747.5,641.2 L2773.8,642.8" fill="none" stroke="#f3e2d2" stroke-width="1" stroke-linejoin="round"/><path d="M2760.6,161.8 L2780,194.2 L2818.9,220 L2857.7,236.2 L2880,249.2 L2935,270 L2990,280 L3040,276 L3080,295 L3110,318 L3150,330" fill="none" stroke="#f3e2d2" stroke-width="1" stroke-linejoin="round"/><path d="M2957.4,158.6 L2938,171.5 L2921.8,200.6 L2917,226.5 L2915.3,265.4 L2905,330 L2900,360 L2900,415 L2890.5,430 L2890.5,478.8 L2881,500 L2877.8,546.7 L2872.5,560 L2868,659" fill="none" stroke="#f3e2d2" stroke-width="1" stroke-linejoin="round"/><path d="M2725,59 L2732,150 L2735,250 L2740,320 L2742,430" fill="none" stroke="#f3e2d2" stroke-width="1" stroke-linejoin="round"/><path d="M1943,540 L1962,540" fill="none" stroke="#f3e2d2" stroke-width="1" stroke-linejoin="round"/><path d="M1968,428 L2010,462 L2035,480 L2048,500 L2060,525 L2075,545 L2090,535 L2101,520" fill="none" stroke="#f3e2d2" stroke-width="1" stroke-linejoin="round"/><path d="M2032,415 L2033,455 L2045,478" fill="none" stroke="#f3e2d2" stroke-width="1" stroke-linejoin="round"/><path d="M2043,590 L2045,640 L2040,659" fill="none" stroke="#f3e2d2" stroke-width="1" stroke-linejoin="round"/><path d="M2180,664 L2220,655 L2290,650 L2340,659" fill="none" stroke="#f3e2d2" stroke-width="1" stroke-linejoin="round"/><path d="M2082,509.6 L2130.8,493.2 L2183.4,485 L2260.4,478.4" fill="none" stroke="#f3e2d2" stroke-width="1" stroke-linejoin="round"/><path d="M2045,135 L2060,110 L2082,85" fill="none" stroke="#f3e2d2" stroke-width="1" stroke-linejoin="round"/><path d="M2120,212 L2150,225" fill="none" stroke="#f3e2d2" stroke-width="1" stroke-linejoin="round"/><path d="M3000,380 L3040,400 L3080,440 L3120,470 L3150,480" fill="none" stroke="#f3e2d2" stroke-width="1" stroke-linejoin="round"/><path d="M3050,431 L3100,440 L3160,470" fill="none" stroke="#f3e2d2" stroke-width="1" stroke-linejoin="round"/><path d="M3050,300 L3060,360 L3070,400 L3078,470 L3075,540 L3080,600 L3070,659" fill="none" stroke="#f3e2d2" stroke-width="1" stroke-linejoin="round"/><path d="M2960,530 L3010,540 L3070,560 L3110,560 L3150,570" fill="none" stroke="#f3e2d2" stroke-width="1" stroke-linejoin="round"/><path d="M3100,300 L3120,370 L3140,420 L3160,470" fill="none" stroke="#f3e2d2" stroke-width="1" stroke-linejoin="round"/><path d="M2880,640 L2950,630 L3000,620 L3080,630 L3140,620 L3195,630" fill="none" stroke="#f3e2d2" stroke-width="1" stroke-linejoin="round"/><path d="M3120,520 L3130,580 L3140,600 L3180,610" fill="none" stroke="#f3e2d2" stroke-width="1" stroke-linejoin="round"/><path d="M2874,436 L2960,435 L3004,433 L3050,431" fill="none" stroke="#f3e2d2" stroke-width="1" stroke-linejoin="round"/><path d="M2690,650 L2700,600 L2730,570" fill="none" stroke="#f3e2d2" stroke-width="1" stroke-linejoin="round"/><path d="M2082.9,273.9 L2407.5,273.9" fill="none" stroke="#a3a3a3" stroke-width="1" stroke-dasharray="2.5,2"/><path d="M2082.9,273.9 L2082.9,526.5" fill="none" stroke="#a3a3a3" stroke-width="1" stroke-dasharray="2.5,2"/><path d="M1944.5,465.0 L2082.9,465.0" fill="none" stroke="#a3a3a3" stroke-width="1" stroke-dasharray="2.5,2"/><path d="M2082.9,526.5 L2498.9,526.5" fill="none" stroke="#a3a3a3" stroke-width="1" stroke-dasharray="2.5,2"/><path d="M1944.5,465.0 L1944.5,659.5" fill="none" stroke="#a3a3a3" stroke-width="1" stroke-dasharray="2.5,2"/><path d="M2176.0,526.5 L2176.0,659.5" fill="none" stroke="#a3a3a3" stroke-width="1" stroke-dasharray="2.5,2"/><path d="M2407.5,59.5 L2407.5,526.5" fill="none" stroke="#a3a3a3" stroke-width="1" stroke-dasharray="2.5,2"/><path d="M2407.5,211.8 L2753.1,211.8" fill="none" stroke="#a3a3a3" stroke-width="1" stroke-dasharray="2.5,2"/><path d="M2407.5,402.5 L2663.5,402.5" fill="none" stroke="#a3a3a3" stroke-width="1" stroke-dasharray="2.5,2"/><path d="M2498.9,526.5 L2498.9,659.5" fill="none" stroke="#a3a3a3" stroke-width="1" stroke-dasharray="2.5,2"/><path d="M2498.9,587.5 L2807.5,587.5" fill="none" stroke="#a3a3a3" stroke-width="1" stroke-dasharray="2.5,2"/><path d="M2757.5,211.8 L2757.5,370.5" fill="none" stroke="#a3a3a3" stroke-width="1" stroke-dasharray="2.5,2"/><path d="M2757.5,370.5 L2997.1,370.5" fill="none" stroke="#a3a3a3" stroke-width="1" stroke-dasharray="2.5,2"/><path d="M2790.5,552.2 L2975.8,552.2" fill="none" stroke="#a3a3a3" stroke-width="1" stroke-dasharray="2.5,2"/><path d="M3025.1,433.8 L3160.5,433.8" fill="none" stroke="#a3a3a3" stroke-width="1" stroke-dasharray="2.5,2"/><path d="M3169.8,487.1 L3169.8,659.5" fill="none" stroke="#a3a3a3" stroke-width="1" stroke-dasharray="2.5,2"/><path d="M2957.9,159.1 L2949.8,162.3 L2948.2,204.4 L2928.8,217.3 L2922.3,230.3 L2928.8,243.2 L2932.0,256.1 L2925.5,270.5 L2930.5,290.5" fill="none" stroke="#a3a3a3" stroke-width="1" stroke-dasharray="2.5,2"/><path d="M3038.8,168.8 L3048.5,184.9 L3080.5,196.5 L3116.5,207.6 L3142.3,214.1 L3155.3,230.3 L3161.8,262.6 L3174.7,267.5" fill="none" stroke="#a3a3a3" stroke-width="1" stroke-dasharray="2.5,2"/><path d="M2957.9,159.1 L3025.8,119.7 L3057.5,121.1 L3077.6,74.9" fill="none" stroke="#a3a3a3" stroke-width="1" stroke-dasharray="2.5,2"/><path d="M3057.5,121.1 L3038.8,168.8" fill="none" stroke="#a3a3a3" stroke-width="1" stroke-dasharray="2.5,2"/><circle cx="2463" cy="138.5" r="11.3" fill="#ed7e79"/><circle cx="2674.5" cy="585.3" r="11.5" fill="#a9aebb"/><text x="2496.75" y="66.5" font-size="27.5" fill="#474747" font-weight="400" text-anchor="start" font-family="Liberation Sans" textLength="75.0" lengthAdjust="spacingAndGlyphs" stroke="#fefefe" stroke-width="3" paint-order="stroke">Minot</text><text x="2137.4" y="116.5" font-size="27.5" fill="#474747" font-weight="400" text-anchor="end" font-family="Liberation Sans" stroke="#fefefe" stroke-width="3" paint-order="stroke">Great Falls</text><text x="1895.35" y="160" font-size="27.5" fill="#474747" font-weight="400" text-anchor="start" font-family="Liberation Sans" textLength="120.8" lengthAdjust="spacingAndGlyphs" stroke="#fefefe" stroke-width="3" paint-order="stroke">Missoula</text><text x="2155.15" y="232.3" font-size="27.5" fill="#474747" font-weight="400" text-anchor="start" font-family="Liberation Sans" textLength="91.8" lengthAdjust="spacingAndGlyphs" stroke="#fefefe" stroke-width="3" paint-order="stroke">Billings</text><text x="2499.15" y="163.4" font-size="27.5" fill="#474747" font-weight="400" text-anchor="start" font-family="Liberation Sans" textLength="117.0" lengthAdjust="spacingAndGlyphs" stroke="#fefefe" stroke-width="3" paint-order="stroke">Bismarck</text><text x="2705.5499999999997" y="159.2" font-size="27.5" fill="#474747" font-weight="400" text-anchor="start" font-family="Liberation Sans" textLength="72.3" lengthAdjust="spacingAndGlyphs" stroke="#fefefe" stroke-width="3" paint-order="stroke">Fargo</text><text x="2775.0299999999997" y="215.8" font-size="19.5" fill="#574f4c" font-weight="700" text-anchor="start" font-family="Liberation Sans" textLength="136.2" lengthAdjust="spacing" stroke="#fefefe" stroke-width="3" paint-order="stroke">MINNESOTA</text><text x="2826.95" y="284.8" font-size="27.5" fill="#474747" font-weight="400" text-anchor="start" font-family="Liberation Sans" textLength="155.8" lengthAdjust="spacingAndGlyphs" stroke="#fefefe" stroke-width="3" paint-order="stroke">Minneapolis</text><text x="3003.13" y="317.8" font-size="19.5" fill="#574f4c" font-weight="700" text-anchor="start" font-family="Liberation Sans" textLength="133.0" lengthAdjust="spacing" stroke="#fefefe" stroke-width="3" paint-order="stroke">WISCONSIN</text><text x="2539.35" y="325.2" font-size="27.5" fill="#474747" font-weight="400" text-anchor="start" font-family="Liberation Sans" textLength="75.2" lengthAdjust="spacingAndGlyphs" stroke="#fefefe" stroke-width="3" paint-order="stroke">Pierre</text><text x="2678.35" y="378" font-size="27.5" fill="#474747" font-weight="400" text-anchor="start" font-family="Liberation Sans" textLength="132.8" lengthAdjust="spacingAndGlyphs" stroke="#fefefe" stroke-width="3" paint-order="stroke">Sioux Falls</text><text x="3083.85" y="409.3" font-size="27.5" fill="#474747" font-weight="400" text-anchor="start" font-family="Liberation Sans" textLength="127.8" lengthAdjust="spacingAndGlyphs" stroke="#fefefe" stroke-width="3" paint-order="stroke">Milwaukee</text><text x="2256.5499999999997" y="420.8" font-size="27.5" fill="#474747" font-weight="400" text-anchor="start" font-family="Liberation Sans" textLength="90.0" lengthAdjust="spacingAndGlyphs" stroke="#fefefe" stroke-width="3" paint-order="stroke">Casper</text><text x="2554.83" y="488.2" font-size="19.5" fill="#574f4c" font-weight="700" text-anchor="start" font-family="Liberation Sans" textLength="116.2" lengthAdjust="spacing" stroke="#fefefe" stroke-width="3" paint-order="stroke">NEBRASKA</text><text x="2814.95" y="499.7" font-size="27.5" fill="#474747" font-weight="400" text-anchor="start" font-family="Liberation Sans" textLength="148.2" lengthAdjust="spacingAndGlyphs" stroke="#fefefe" stroke-width="3" paint-order="stroke">Des Moines</text><text x="3113.35" y="481.6" font-size="27.5" fill="#474747" font-weight="400" text-anchor="start" font-family="Liberation Sans" textLength="102.8" lengthAdjust="spacingAndGlyphs" stroke="#fefefe" stroke-width="3" paint-order="stroke">Chicago</text><text x="2307.5499999999997" y="527.7" font-size="27.5" fill="#474747" font-weight="400" text-anchor="start" font-family="Liberation Sans" textLength="126.2" lengthAdjust="spacingAndGlyphs" stroke="#fefefe" stroke-width="3" paint-order="stroke">Cheyenne</text><text x="1959.75" y="551.7" font-size="27.5" fill="#474747" font-weight="400" text-anchor="start" font-family="Liberation Sans" textLength="168.8" lengthAdjust="spacingAndGlyphs" stroke="#fefefe" stroke-width="3" paint-order="stroke">Salt Lake City</text><text x="2509.52" y="591.8" font-size="33" fill="#444" font-weight="700" text-anchor="start" font-family="Liberation Sans" textLength="126.8" lengthAdjust="spacingAndGlyphs" stroke="#fefefe" stroke-width="3" paint-order="stroke">UNITED</text><text x="2514.42" y="633" font-size="33" fill="#444" font-weight="700" text-anchor="start" font-family="Liberation Sans" textLength="115.9" lengthAdjust="spacingAndGlyphs" stroke="#fefefe" stroke-width="3" paint-order="stroke">STATES</text><text x="2317.35" y="611.6" font-size="27.5" fill="#474747" font-weight="400" text-anchor="start" font-family="Liberation Sans" textLength="93.2" lengthAdjust="spacingAndGlyphs" stroke="#fefefe" stroke-width="3" paint-order="stroke">Denver</text><text x="2022.73" y="629" font-size="19.5" fill="#574f4c" font-weight="700" text-anchor="start" font-family="Liberation Sans" textLength="60.1" lengthAdjust="spacing" stroke="#fefefe" stroke-width="3" paint-order="stroke">UTAH</text><text x="3030.0299999999997" y="589.5" font-size="19.5" fill="#574f4c" font-weight="700" text-anchor="start" font-family="Liberation Sans" textLength="104.0" lengthAdjust="spacing" stroke="#fefefe" stroke-width="3" paint-order="stroke">ILLINOIS</text><text x="3181.33" y="573.8" font-size="19.5" fill="#574f4c" font-weight="700" text-anchor="start" font-family="Liberation Sans" textLength="112.0" lengthAdjust="spacing" stroke="#fefefe" stroke-width="3" paint-order="stroke">INDIANA</text><text x="2772.15" y="649.4" font-size="27.5" fill="#474747" font-weight="400" text-anchor="start" font-family="Liberation Sans" textLength="143.3" lengthAdjust="spacingAndGlyphs" stroke="#fefefe" stroke-width="3" paint-order="stroke">Kansas City</text><text x="2261.35" y="661" font-size="27.5" fill="#474747" font-weight="400" text-anchor="start" font-family="Liberation Sans" textLength="218.3" lengthAdjust="spacingAndGlyphs" stroke="#fefefe" stroke-width="3" paint-order="stroke">Colorado Springs</text><text x="1908.83" y="367" font-size="19.5" fill="#574f4c" font-weight="700" text-anchor="start" font-family="Liberation Sans" textLength="76.0" lengthAdjust="spacing" stroke="#fefefe" stroke-width="3" paint-order="stroke">IDAHO</text><text x="3059.1" y="608.3" font-size="21" fill="#69707d" font-weight="700" font-family="Liberation Sans" textLength="60.9" lengthAdjust="spacingAndGlyphs">zoom:</text><text x="3128.2" y="608.3" font-size="21" fill="#69707d" font-family="Liberation Sans" textLength="41.1" lengthAdjust="spacingAndGlyphs">4.02</text></svg>
<div class="r" style="left:1967px;top:83px;width:64px;height:128px;background:#fff;border-radius:9px;box-shadow:0 1px 5px rgba(0,0,0,0.06),0 4px 22px rgba(0,0,0,0.14)"></div>
<div class="r" style="left:1967px;top:227px;width:64px;height:64px;background:#fff;border-radius:9px;box-shadow:0 1px 5px rgba(0,0,0,0.06),0 4px 22px rgba(0,0,0,0.14)"></div>
<div class="r" style="left:1967px;top:307px;width:64px;height:64px;background:#2c6fc0;border-radius:9px;box-shadow:0 1px 5px rgba(0,0,0,0.06),0 4px 22px rgba(0,0,0,0.14)"></div>
<div class="r" style="left:3107px;top:81px;width:64px;height:64px;background:#fff;border-radius:9px;box-shadow:0 1px 5px rgba(0,0,0,0.06),0 4px 22px rgba(0,0,0,0.14)"></div>
<svg class="r ov" width="1" height="1"><circle cx="1999" cy="114.5" r="15" fill="#343741"/><path d="M1991,114.5 H2007 M1999,106.5 V122.5" stroke="#fff" stroke-width="2.2"/><circle cx="1999" cy="178.6" r="15" fill="#343741"/><path d="M1991,178.6 H2007" stroke="#fff" stroke-width="2.4"/><circle cx="1999" cy="258.6" r="12.2" fill="none" stroke="#343741" stroke-width="2.1" stroke-dasharray="12.2,7" stroke-dashoffset="-3.5"/><path d="M1999,243.5 V251 M1999,266.2 V273.7 M1984,258.6 H1991.5 M2006.5,258.6 H2014" stroke="#343741" stroke-width="2.1"/><circle cx="1999" cy="258.6" r="1.8" fill="#343741"/><path d="M1986,352 L2012,325.5 M2003,325.5 H2012.5 V335 M1985.5,343 V352.5 H1995" fill="none" stroke="#fff" stroke-width="2.2"/><path d="M3138.8,99.6 L3152.6,123.6 H3125 Z" fill="none" stroke="#343741" stroke-width="2.1" stroke-linejoin="round"/><path d="M3138.8,107.5 V116.5" stroke="#343741" stroke-width="2"/><circle cx="3138.8" cy="119.7" r="1.2" fill="#343741"/></svg>
<svg class="r ov" width="1" height="1"><text x="714.3" y="715.3" font-size="24.5" fill="#1a1c21" font-weight="700" text-anchor="start" textLength="59.0" lengthAdjust="spacingAndGlyphs" font-family="Liberation Sans" >Time</text></svg>
<svg class="r ov" width="1" height="1"><text x="1025.2" y="715.3" font-size="24.5" fill="#1a1c21" font-weight="700" text-anchor="start" textLength="96.2" lengthAdjust="spacingAndGlyphs" font-family="Liberation Sans" >Severity</text></svg>
<svg class="r" style="left:1123.5px;top:692.5px" width="21" height="21"><circle cx="10.5" cy="10.5" r="7.8" fill="none" stroke="#69707d" stroke-width="1.4"/><path d="M7.9,8.3 a2.6,2.6 0 1 1 3.6,2.4 c-0.9,0.4 -1.0,0.9 -1.0,2.2" fill="none" stroke="#69707d" stroke-width="1.4"/><circle cx="10.5" cy="14.8" r="0.9" fill="#69707d"/></svg>
<svg class="r" style="left:1156px;top:696px" width="26" height="24"><path d="M12.5,2 V21 M3.5,12 L12.5,21 L21.5,12" fill="none" stroke="#1a1c21" stroke-width="2"/></svg>
<svg class="r ov" width="1" height="1"><text x="1336.2" y="715.3" font-size="24.5" fill="#1a1c21" font-weight="700" text-anchor="start" textLength="102.5" lengthAdjust="spacingAndGlyphs" font-family="Liberation Sans" >Detector</text></svg>
<svg class="r ov" width="1" height="1"><text x="1647.0" y="715.3" font-size="24.5" fill="#1a1c21" font-weight="700" text-anchor="start" textLength="158.9" lengthAdjust="spacingAndGlyphs" font-family="Liberation Sans" >Influenced by</text></svg>
<svg class="r ov" width="1" height="1"><text x="1958.4" y="715.3" font-size="24.5" fill="#1a1c21" font-weight="700" text-anchor="start" textLength="75.0" lengthAdjust="spacingAndGlyphs" font-family="Liberation Sans" >Actual</text></svg>
<svg class="r" style="left:2035.5px;top:692.5px" width="21" height="21"><circle cx="10.5" cy="10.5" r="7.8" fill="none" stroke="#69707d" stroke-width="1.4"/><path d="M7.9,8.3 a2.6,2.6 0 1 1 3.6,2.4 c-0.9,0.4 -1.0,0.9 -1.0,2.2" fill="none" stroke="#69707d" stroke-width="1.4"/><circle cx="10.5" cy="14.8" r="0.9" fill="#69707d"/></svg>
<svg class="r ov" width="1" height="1"><text x="2269.4" y="715.3" font-size="24.5" fill="#1a1c21" font-weight="700" text-anchor="start" textLength="83.9" lengthAdjust="spacingAndGlyphs" font-family="Liberation Sans" >Typical</text></svg>
<svg class="r" style="left:2354.5px;top:692.5px" width="21" height="21"><circle cx="10.5" cy="10.5" r="7.8" fill="none" stroke="#69707d" stroke-width="1.4"/><path d="M7.9,8.3 a2.6,2.6 0 1 1 3.6,2.4 c-0.9,0.4 -1.0,0.9 -1.0,2.2" fill="none" stroke="#69707d" stroke-width="1.4"/><circle cx="10.5" cy="14.8" r="0.9" fill="#69707d"/></svg>
<svg class="r ov" width="1" height="1"><text x="2580.0" y="715.3" font-size="24.5" fill="#1a1c21" font-weight="700" text-anchor="start" textLength="135.4" lengthAdjust="spacingAndGlyphs" font-family="Liberation Sans" >Description</text></svg>
<svg class="r ov" width="1" height="1"><text x="2890.8" y="714.0" font-size="24.5" fill="#1a1c21" font-weight="700" text-anchor="start" textLength="90.2" lengthAdjust="spacingAndGlyphs" font-family="Liberation Sans" >Actions</text></svg>
<div class="r" style="left:643.0px;top:730.6px;width:2551.4px;height:2.5px;background:#d3dae6;"></div>
<div class="r" style="left:643.0px;top:1013.8px;width:2551.4px;height:2.0px;background:#d3dae6;"></div>
<div class="r" style="left:643.0px;top:1164.0px;width:2551.4px;height:2.0px;background:#d3dae6;"></div>
<svg class="r" style="left:664px;top:858.0px" width="22" height="30"><path d="M5.5,3 L16.5,15 L5.5,27" fill="none" stroke="#2b6fbf" stroke-width="3"/></svg>
<svg class="r" style="left:664px;top:1075.0px" width="22" height="30"><path d="M5.5,3 L16.5,15 L5.5,27" fill="none" stroke="#2b6fbf" stroke-width="3"/></svg>
<svg class="r ov" width="1" height="1"><text x="714.2" y="881.2" font-size="26" fill="#343741" font-weight="400" text-anchor="start" textLength="183.4" lengthAdjust="spacingAndGlyphs" stroke="#343741" stroke-width="0.3" font-family="Liberation Sans" >March 1st 2022</text></svg>
<div class="r" style="left:1034px;top:865px;width:16px;height:16px;border-radius:50%;background:#e95b55"></div>
<svg class="r ov" width="1" height="1"><text x="1065.4" y="881.2" font-size="26" fill="#343741" font-weight="400" text-anchor="start" textLength="29.9" lengthAdjust="spacingAndGlyphs" stroke="#343741" stroke-width="0.3" font-family="Liberation Sans" >91</text></svg>
<svg class="r ov" width="1" height="1"><text x="1337.0" y="881.2" font-size="26" fill="#343741" font-weight="400" text-anchor="start" textLength="231.7" lengthAdjust="spacingAndGlyphs" stroke="#343741" stroke-width="0.3" font-family="Liberation Sans" >Unusual coordinates</text></svg>
<svg class="r ov" width="1" height="1"><text x="1958.8" y="881.2" font-size="26" fill="#343741" font-weight="400" text-anchor="start" textLength="134.4" lengthAdjust="spacingAndGlyphs" stroke="#343741" stroke-width="0.3" font-family="Liberation Sans" >[47,-102.8]</text></svg>
<svg class="r ov" width="1" height="1"><text x="2270.0" y="881.2" font-size="26" fill="#343741" font-weight="400" text-anchor="start" textLength="118.2" lengthAdjust="spacingAndGlyphs" stroke="#343741" stroke-width="0.3" font-family="Liberation Sans" >[40,-98.2]</text></svg>
<svg class="r" style="left:2580px;top:860px" width="26" height="24"><path d="M12.2,2.5 L23.5,21.5 H1 Z" fill="none" stroke="#343741" stroke-width="1.7" stroke-linejoin="round"/><path d="M12.2,8.5 V15.5" stroke="#343741" stroke-width="1.8"/><circle cx="12.2" cy="18.2" r="1.1" fill="#343741"/></svg>
<svg class="r ov" width="1" height="1"><text x="2619.2" y="881.2" font-size="26" fill="#343741" font-weight="400" text-anchor="start" textLength="173.3" lengthAdjust="spacingAndGlyphs" stroke="#343741" stroke-width="0.3" font-family="Liberation Sans" >Unusual values</text></svg>
<svg class="r ov" width="1" height="1"><text x="1647.0" y="764.0" font-size="25.5" fill="#343741" font-weight="400" text-anchor="start" textLength="265.8" lengthAdjust="spacingAndGlyphs" stroke="#343741" stroke-width="0.3" font-family="Liberation Sans" >extension.keyword: css</text></svg>
<svg class="r" style="left:1650.2px;top:774.4px" width="26" height="26" viewBox="0 0 26 26"><circle cx="13" cy="13" r="10.5" fill="none" stroke="#79aad9" stroke-width="1.6"/><line x1="7" y1="13" x2="19" y2="13" stroke="#79aad9" stroke-width="1.6"/><line x1="13" y1="7" x2="13" y2="19" stroke="#79aad9" stroke-width="1.6"/></svg>
<svg class="r" style="left:1682.0px;top:774.4px" width="26" height="26" viewBox="0 0 26 26"><circle cx="13" cy="13" r="10.5" fill="none" stroke="#79aad9" stroke-width="1.6"/><line x1="7" y1="13" x2="19" y2="13" stroke="#79aad9" stroke-width="1.6"/></svg>
<svg class="r ov" width="1" height="1"><text x="1647.0" y="828.7" font-size="25.5" fill="#343741" font-weight="400" text-anchor="start" textLength="255.2" lengthAdjust="spacingAndGlyphs" stroke="#343741" stroke-width="0.3" font-family="Liberation Sans" >extension.keyword: gz</text></svg>
<svg class="r" style="left:1904.6px;top:808.7px" width="26" height="26" viewBox="0 0 26 26"><circle cx="13" cy="13" r="10.5" fill="none" stroke="#79aad9" stroke-width="1.6"/><line x1="7" y1="13" x2="19" y2="13" stroke="#79aad9" stroke-width="1.6"/><line x1="13" y1="7" x2="13" y2="19" stroke="#79aad9" stroke-width="1.6"/></svg>
<svg class="r" style="left:1650.2px;top:840.9px" width="26" height="26" viewBox="0 0 26 26"><circle cx="13" cy="13" r="10.5" fill="none" stroke="#79aad9" stroke-width="1.6"/><line x1="7" y1="13" x2="19" y2="13" stroke="#79aad9" stroke-width="1.6"/></svg>
<svg class="r ov" width="1" height="1"><text x="1647.0" y="895.0" font-size="25.5" fill="#343741" font-weight="400" text-anchor="start" textLength="149.6" lengthAdjust="spacingAndGlyphs" stroke="#343741" stroke-width="0.3" font-family="Liberation Sans" >geo.dest: CN</text></svg>
<svg class="r" style="left:1799.0px;top:875.5px" width="26" height="26" viewBox="0 0 26 26"><circle cx="13" cy="13" r="10.5" fill="none" stroke="#79aad9" stroke-width="1.6"/><line x1="7" y1="13" x2="19" y2="13" stroke="#79aad9" stroke-width="1.6"/><line x1="13" y1="7" x2="13" y2="19" stroke="#79aad9" stroke-width="1.6"/></svg>
<svg class="r" style="left:1831.0px;top:875.5px" width="26" height="26" viewBox="0 0 26 26"><circle cx="13" cy="13" r="10.5" fill="none" stroke="#79aad9" stroke-width="1.6"/><line x1="7" y1="13" x2="19" y2="13" stroke="#79aad9" stroke-width="1.6"/></svg>
<svg class="r ov" width="1" height="1"><text x="1647.0" y="928.4" font-size="25.5" fill="#343741" font-weight="400" text-anchor="start" textLength="151.0" lengthAdjust="spacingAndGlyphs" stroke="#343741" stroke-width="0.3" font-family="Liberation Sans" >geo.dest: MR</text></svg>
<svg class="r" style="left:1800.0px;top:908.4px" width="26" height="26" viewBox="0 0 26 26"><circle cx="13" cy="13" r="10.5" fill="none" stroke="#79aad9" stroke-width="1.6"/><line x1="7" y1="13" x2="19" y2="13" stroke="#79aad9" stroke-width="1.6"/><line x1="13" y1="7" x2="13" y2="19" stroke="#79aad9" stroke-width="1.6"/></svg>
<svg class="r" style="left:1832.2px;top:908.4px" width="26" height="26" viewBox="0 0 26 26"><circle cx="13" cy="13" r="10.5" fill="none" stroke="#79aad9" stroke-width="1.6"/><line x1="7" y1="13" x2="19" y2="13" stroke="#79aad9" stroke-width="1.6"/></svg>
<svg class="r ov" width="1" height="1"><text x="1647.0" y="961.7" font-size="25.5" fill="#343741" font-weight="400" text-anchor="start" textLength="145.1" lengthAdjust="spacingAndGlyphs" stroke="#343741" stroke-width="0.3" font-family="Liberation Sans" >geo.dest: PK</text></svg>
<svg class="r" style="left:1794.0px;top:942.4px" width="26" height="26" viewBox="0 0 26 26"><circle cx="13" cy="13" r="10.5" fill="none" stroke="#79aad9" stroke-width="1.6"/><line x1="7" y1="13" x2="19" y2="13" stroke="#79aad9" stroke-width="1.6"/><line x1="13" y1="7" x2="13" y2="19" stroke="#79aad9" stroke-width="1.6"/></svg>
<svg class="r" style="left:1826.2px;top:942.4px" width="26" height="26" viewBox="0 0 26 26"><circle cx="13" cy="13" r="10.5" fill="none" stroke="#79aad9" stroke-width="1.6"/><line x1="7" y1="13" x2="19" y2="13" stroke="#79aad9" stroke-width="1.6"/></svg>
<svg class="r ov" width="1" height="1"><text x="1647.0" y="996.7" font-size="25" fill="#2b6fbf" font-weight="700" text-anchor="start" textLength="131.0" lengthAdjust="spacingAndGlyphs" font-family="Liberation Sans" >and 4 more</text></svg>
<svg class="r ov" width="1" height="1"><text x="714.4" y="1098.5" font-size="26" fill="#343741" font-weight="400" text-anchor="start" textLength="231.6" lengthAdjust="spacingAndGlyphs" stroke="#343741" stroke-width="0.3" font-family="Liberation Sans" >February 27th 2022</text></svg>
<div class="r" style="left:1034px;top:1082px;width:16px;height:16px;border-radius:50%;background:#e95b55"></div>
<svg class="r ov" width="1" height="1"><text x="1065.4" y="1098.5" font-size="26" fill="#343741" font-weight="400" text-anchor="start" textLength="31.6" lengthAdjust="spacingAndGlyphs" stroke="#343741" stroke-width="0.3" font-family="Liberation Sans" >82</text></svg>
<svg class="r ov" width="1" height="1"><text x="1335.9" y="1098.5" font-size="26" fill="#343741" font-weight="400" text-anchor="start" textLength="188.6" lengthAdjust="spacingAndGlyphs" stroke="#343741" stroke-width="0.3" font-family="Liberation Sans" >high_sum(bytes)</text></svg>
<svg class="r ov" width="1" height="1"><text x="1647.0" y="1047.2" font-size="25.5" fill="#343741" font-weight="400" text-anchor="start" textLength="265.8" lengthAdjust="spacingAndGlyphs" stroke="#343741" stroke-width="0.3" font-family="Liberation Sans" >extension.keyword: css</text></svg>
<svg class="r" style="left:1650.2px;top:1057.2px" width="26" height="26" viewBox="0 0 26 26"><circle cx="13" cy="13" r="10.5" fill="none" stroke="#79aad9" stroke-width="1.6"/><line x1="7" y1="13" x2="19" y2="13" stroke="#79aad9" stroke-width="1.6"/><line x1="13" y1="7" x2="13" y2="19" stroke="#79aad9" stroke-width="1.6"/></svg>
<svg class="r" style="left:1682.1px;top:1057.2px" width="26" height="26" viewBox="0 0 26 26"><circle cx="13" cy="13" r="10.5" fill="none" stroke="#79aad9" stroke-width="1.6"/><line x1="7" y1="13" x2="19" y2="13" stroke="#79aad9" stroke-width="1.6"/></svg>
<svg class="r ov" width="1" height="1"><text x="1647.0" y="1112.7" font-size="25.5" fill="#343741" font-weight="400" text-anchor="start" textLength="149.6" lengthAdjust="spacingAndGlyphs" stroke="#343741" stroke-width="0.3" font-family="Liberation Sans" >geo.dest: CN</text></svg>
<svg class="r" style="left:1799.2px;top:1090.8px" width="26" height="26" viewBox="0 0 26 26"><circle cx="13" cy="13" r="10.5" fill="none" stroke="#79aad9" stroke-width="1.6"/><line x1="7" y1="13" x2="19" y2="13" stroke="#79aad9" stroke-width="1.6"/><line x1="13" y1="7" x2="13" y2="19" stroke="#79aad9" stroke-width="1.6"/></svg>
<svg class="r" style="left:1831.1px;top:1090.8px" width="26" height="26" viewBox="0 0 26 26"><circle cx="13" cy="13" r="10.5" fill="none" stroke="#79aad9" stroke-width="1.6"/><line x1="7" y1="13" x2="19" y2="13" stroke="#79aad9" stroke-width="1.6"/></svg>
<svg class="r ov" width="1" height="1"><text x="1647.0" y="1146.3" font-size="25.5" fill="#343741" font-weight="400" text-anchor="start" textLength="131.4" lengthAdjust="spacingAndGlyphs" stroke="#343741" stroke-width="0.3" font-family="Liberation Sans" >geo.src: US</text></svg>
<svg class="r" style="left:1780.3px;top:1124.2px" width="26" height="26" viewBox="0 0 26 26"><circle cx="13" cy="13" r="10.5" fill="none" stroke="#79aad9" stroke-width="1.6"/><line x1="7" y1="13" x2="19" y2="13" stroke="#79aad9" stroke-width="1.6"/><line x1="13" y1="7" x2="13" y2="19" stroke="#79aad9" stroke-width="1.6"/></svg>
<svg class="r" style="left:1812.0px;top:1124.2px" width="26" height="26" viewBox="0 0 26 26"><circle cx="13" cy="13" r="10.5" fill="none" stroke="#79aad9" stroke-width="1.6"/><line x1="7" y1="13" x2="19" y2="13" stroke="#79aad9" stroke-width="1.6"/></svg>
<svg class="r ov" width="1" height="1"><text x="1958.0" y="1098.5" font-size="26" fill="#343741" font-weight="400" text-anchor="start" textLength="85.0" lengthAdjust="spacingAndGlyphs" stroke="#343741" stroke-width="0.3" font-family="Liberation Sans" >83,560</text></svg>
<svg class="r ov" width="1" height="1"><text x="2268.9" y="1098.5" font-size="26" fill="#343741" font-weight="400" text-anchor="start" textLength="138.4" lengthAdjust="spacingAndGlyphs" stroke="#343741" stroke-width="0.3" font-family="Liberation Sans" >23,116.099</text></svg>
<svg class="r" style="left:2580px;top:1078px" width="26" height="24"><path d="M12.5,20 V4 M5,11.5 L12.5,4 L20,11.5" fill="none" stroke="#343741" stroke-width="1.8"/></svg>
<svg class="r ov" width="1" height="1"><text x="2619.2" y="1098.5" font-size="26" fill="#343741" font-weight="400" text-anchor="start" textLength="108.8" lengthAdjust="spacingAndGlyphs" stroke="#343741" stroke-width="0.3" font-family="Liberation Sans" >4x higher</text></svg>
<svg class="r ov" width="1" height="1"><polygon points="2920.56,1074.79 2927.44,1074.79 2929.45,1080.26 2935.19,1079.27 2938.63,1085.23 2934.90,1089.70 2938.63,1094.17 2935.19,1100.13 2929.45,1099.14 2927.44,1104.61 2920.56,1104.61 2918.55,1099.14 2912.81,1100.13 2909.37,1094.17 2913.10,1089.70 2909.37,1085.23 2912.81,1079.27 2918.55,1080.26" fill="none" stroke="#343741" stroke-width="1.9" stroke-linejoin="round"/><circle cx="2924" cy="1089.7" r="5.3" fill="none" stroke="#343741" stroke-width="1.9"/></svg>
</body></html>
